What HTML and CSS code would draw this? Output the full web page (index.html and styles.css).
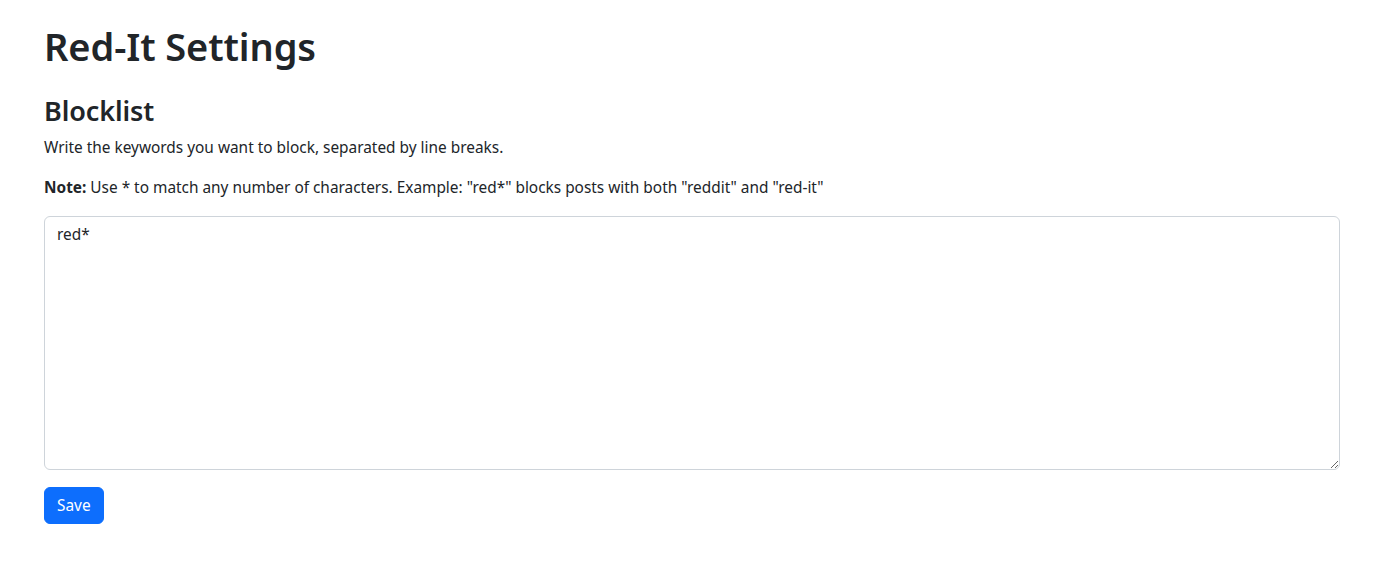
FILE: index.html
```html
<!DOCTYPE html>
<html lang="en">
<head>
<meta charset="utf-8">
<title>Red-It Settings</title>
<link rel="stylesheet" href="styles.css">
</head>
<body>
<main class="container">
  <h1 class="title">Red-It Settings</h1>
  <h3 class="section-title">Blocklist</h3>
  <p class="text">Write the keywords you want to block, separated by line breaks.</p>
  <p class="text"><strong>Note:</strong> Use * to match any number of characters. Example: "red*" blocks posts with both "reddit" and "red-it"</p>
  <textarea class="blocklist" rows="10">red*</textarea>
  <div class="actions"><button class="btn-save" type="button">Save</button></div>
</main>
</body>
</html>
```

FILE: styles.css
```css
* { box-sizing: border-box; }
html, body { margin: 0; padding: 0; background: #fff; }
body {
  font-family: "Noto Sans", "Liberation Sans", sans-serif;
  font-size: 15.4px;
  line-height: 24px;
  color: #212529;
}
.container {
  padding: 22px 46px 0 44px;
  display: flex;
  flex-direction: column;
}
.title {
  margin: 0 0 8px;
  font-size: 38px;
  font-weight: 600;
  line-height: 48px;
  letter-spacing: -0.1px;
}
.section-title {
  margin: 16px 0 8px;
  font-size: 27px;
  font-weight: 600;
  line-height: 34px;
  letter-spacing: -0.1px;
}
.text { margin: 0 0 16px; }
.text strong { font-weight: 700; }
.note-line { letter-spacing: -0.05px; }
.blocklist {
  display: block;
  width: 100%;
  height: 254px;
  padding: 6px 12px;
  border: 1px solid #ced4da;
  border-radius: 6px;
  font: inherit;
  color: #212529;
  resize: vertical;
}
.actions { margin-top: 17px; }
.btn-save {
  background: #0d6efd;
  color: #fff;
  border: 1px solid #0d6efd;
  border-radius: 6px;
  padding: 6px 12px;
  font: inherit;
  height: 37px;
}
```
